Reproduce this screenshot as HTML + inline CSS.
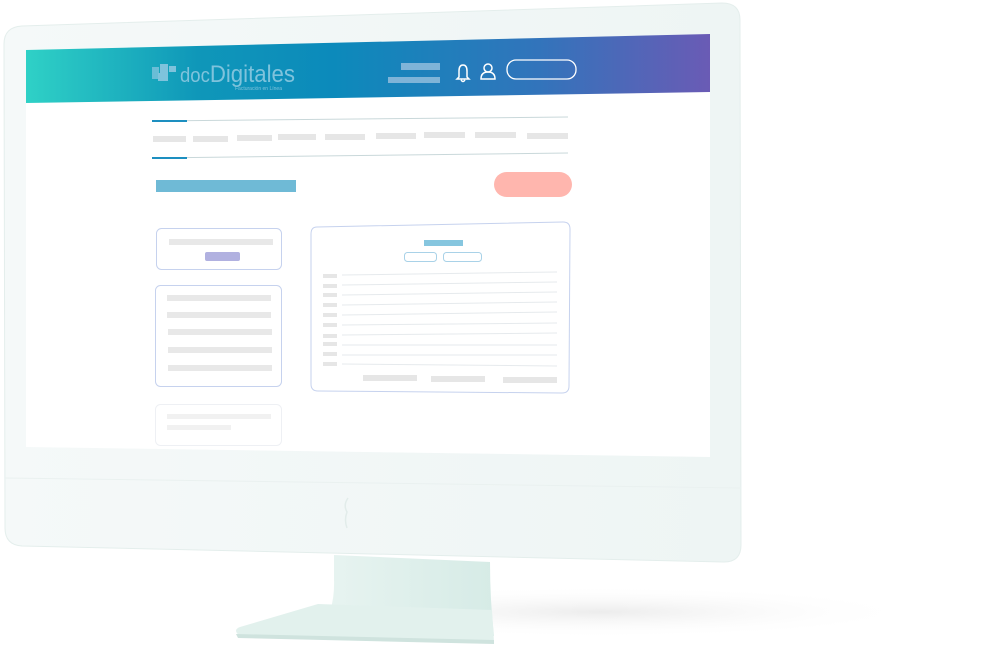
<!DOCTYPE html>
<html><head><meta charset="utf-8"><style>
html,body{margin:0;padding:0;background:#fff;width:1000px;height:648px;overflow:hidden}
svg{display:block}
</style></head><body>
<svg width="1000" height="648" viewBox="0 0 1000 648" xmlns="http://www.w3.org/2000/svg">
<defs>
<linearGradient id="hd" x1="0" x2="1" y1="0" y2="0">
<stop offset="0" stop-color="#2fd1c6"/><stop offset="0.25" stop-color="#0f97b9"/><stop offset="0.45" stop-color="#0c8abb"/><stop offset="0.75" stop-color="#3274bb"/><stop offset="1" stop-color="#6a5bb5"/>
</linearGradient>
<linearGradient id="bz" x1="0" x2="1"><stop offset="0" stop-color="#f5f9f9"/><stop offset="1" stop-color="#eef5f4"/></linearGradient>
<linearGradient id="st" x1="0" x2="1"><stop offset="0" stop-color="#e8f4f1"/><stop offset="1" stop-color="#d6ebe6"/></linearGradient>
<radialGradient id="sh" cx="0.5" cy="0.5" r="0.5"><stop offset="0" stop-color="#ececec"/><stop offset="1" stop-color="#fff" stop-opacity="0"/></radialGradient>
</defs>
<ellipse cx="600" cy="612" rx="320" ry="26" fill="url(#sh)"/>
<!-- stand -->
<path d="M334 555 L490 562 Q490 600 494 636 L320 632 Q335 610 334 580 Z" fill="url(#st)"/>
<path d="M318 604 L492 610 L494 642 L240 636 Q232 630 240 627 Z" fill="#e2f1ed"/>
<path d="M236 634 L494 640 L494 644 L238 638 Z" fill="#cfe3de"/>
<!-- monitor body -->
<path d="M22 26 L722 3 Q740 3 740 20 L741 545 Q741 562 724 562 L22 546 Q5 545 5 528 L4 44 Q4 27 22 26 Z" fill="url(#bz)" stroke="#e4eeec" stroke-width="1"/>
<path d="M5 478 L741 488" stroke="#eaf1f0" stroke-width="1"/>
<!-- screen -->
<path d="M26 50 L710 34 L710 457 L26 447 Z" fill="#fff"/>
<path d="M26 50 L710 34 L710 92 L26 103 Z" fill="url(#hd)"/>
<!-- logo -->
<g fill="#7fc3dc">
<rect x="152" y="67" width="7" height="12" opacity="0.8"/><rect x="160" y="64" width="8" height="9"/><rect x="158" y="73" width="10" height="8"/><rect x="169" y="66" width="7" height="6"/>
</g>
<text x="180" y="82" font-family="Liberation Sans, sans-serif" font-size="20" fill="#7fc3dc" textLength="115" lengthAdjust="spacingAndGlyphs">doc<tspan font-size="24">Digitales</tspan></text>
<text x="235" y="90" font-family="Liberation Sans, sans-serif" font-size="5" fill="#7fc3dc">Facturación en Línea</text>
<rect x="401" y="63" width="39" height="7" fill="#7fb4d8"/>
<rect x="388" y="77" width="52" height="6" fill="#7fb4d8"/>
<path d="M459 77 L459 71 Q459 65 463 65 Q467 65 467 71 L467 77 L469 79 L457 79 Z M461 80 Q463 83 465 80" fill="none" stroke="#fff" stroke-width="1.5"/>
<circle cx="488" cy="68" r="4" fill="none" stroke="#fff" stroke-width="1.5"/>
<path d="M481 79 Q481 72 488 72 Q495 72 495 79 Z" fill="none" stroke="#fff" stroke-width="1.5"/>
<rect x="507" y="60" width="69" height="19" rx="9" fill="none" stroke="#fff" stroke-width="1.3"/>
<!-- tabs -->
<path d="M152 121 L568 117" stroke="#c9d8da" stroke-width="1"/>
<rect x="152" y="120" width="35" height="2" fill="#1d8fc0"/>
<g fill="#e6e6e6">
<rect x="153" y="136" width="33" height="6"/><rect x="193" y="136" width="35" height="6"/><rect x="237" y="135" width="35" height="6"/><rect x="278" y="134" width="38" height="6"/><rect x="325" y="134" width="40" height="6"/><rect x="376" y="133" width="40" height="6"/><rect x="424" y="132" width="41" height="6"/><rect x="475" y="132" width="41" height="6"/><rect x="527" y="133" width="41" height="6"/>
</g>
<path d="M152 158 L568 153" stroke="#c9d8da" stroke-width="1"/>
<rect x="152" y="157" width="35" height="2" fill="#1d8fc0"/>
<rect x="156" y="180" width="140" height="12" fill="#6fbad6"/>
<rect x="494" y="172" width="78" height="25" rx="12.5" fill="#ffb6ae"/>
<!-- card1 -->
<rect x="156.5" y="228.5" width="125" height="41" rx="5" fill="#fff" stroke="#c6d2ee" stroke-width="1"/>
<rect x="169" y="239" width="104" height="6" fill="#e8e8e8"/>
<rect x="205" y="252" width="35" height="9" rx="2" fill="#b1b1e0"/>
<!-- card2 -->
<rect x="155.5" y="285.5" width="126" height="101" rx="5" fill="#fff" stroke="#c6d2ee" stroke-width="1"/>
<g fill="#e8e8e8">
<rect x="167" y="295" width="104" height="6"/><rect x="167" y="312" width="104" height="6"/><rect x="168" y="329" width="104" height="6"/><rect x="168" y="347" width="104" height="6"/><rect x="168" y="365" width="104" height="6"/>
</g>
<!-- card3 -->
<rect x="155.5" y="404.5" width="126" height="41" rx="5" fill="#fff" stroke="#eef0f4" stroke-width="1"/>
<rect x="167" y="414" width="104" height="5" fill="#f1f1f1"/>
<rect x="167" y="425" width="64" height="5" fill="#f1f1f1"/>
<!-- right card -->
<path d="M317 227 L563 222 Q570 222 570 229 L569 386 Q569 393 562 393 L318 391 Q311 391 311 384 L311 234 Q311 227 317 227 Z" fill="#fff" stroke="#c6d2ee" stroke-width="1"/>
<rect x="424" y="240" width="39" height="6" fill="#86c6df"/>
<rect x="404.5" y="252.5" width="32" height="9" rx="3" fill="none" stroke="#a9d2e8"/>
<rect x="443.5" y="252.5" width="38" height="9" rx="3" fill="none" stroke="#a9d2e8"/>
<g fill="#e6e6e6">
<rect x="323" y="274" width="14" height="4"/><rect x="323" y="284" width="14" height="4"/><rect x="323" y="293" width="14" height="4"/><rect x="323" y="303" width="14" height="4"/><rect x="323" y="313" width="14" height="4"/><rect x="323" y="323" width="14" height="4"/><rect x="323" y="334" width="14" height="4"/><rect x="323" y="342" width="14" height="4"/><rect x="323" y="352" width="14" height="4"/><rect x="323" y="362" width="14" height="4"/>
<rect x="363" y="375" width="54" height="6"/><rect x="431" y="376" width="54" height="6"/><rect x="503" y="377" width="54" height="6"/>
</g>
<g stroke="#e6eaed" stroke-width="1">
<path d="M342 275 L557 272"/><path d="M342 285 L557 282"/><path d="M342 295 L557 292"/><path d="M342 305 L557 302"/><path d="M342 315 L557 312"/><path d="M342 325 L557 323"/><path d="M342 335 L557 333"/><path d="M342 345 L557 345"/><path d="M342 355 L557 355"/><path d="M342 364 L557 366"/>
</g>
<path d="M348 498 Q343 505 347 512 Q344 520 347 528" fill="none" stroke="#e2ecea" stroke-width="1.5"/>
</svg>
</body></html>
